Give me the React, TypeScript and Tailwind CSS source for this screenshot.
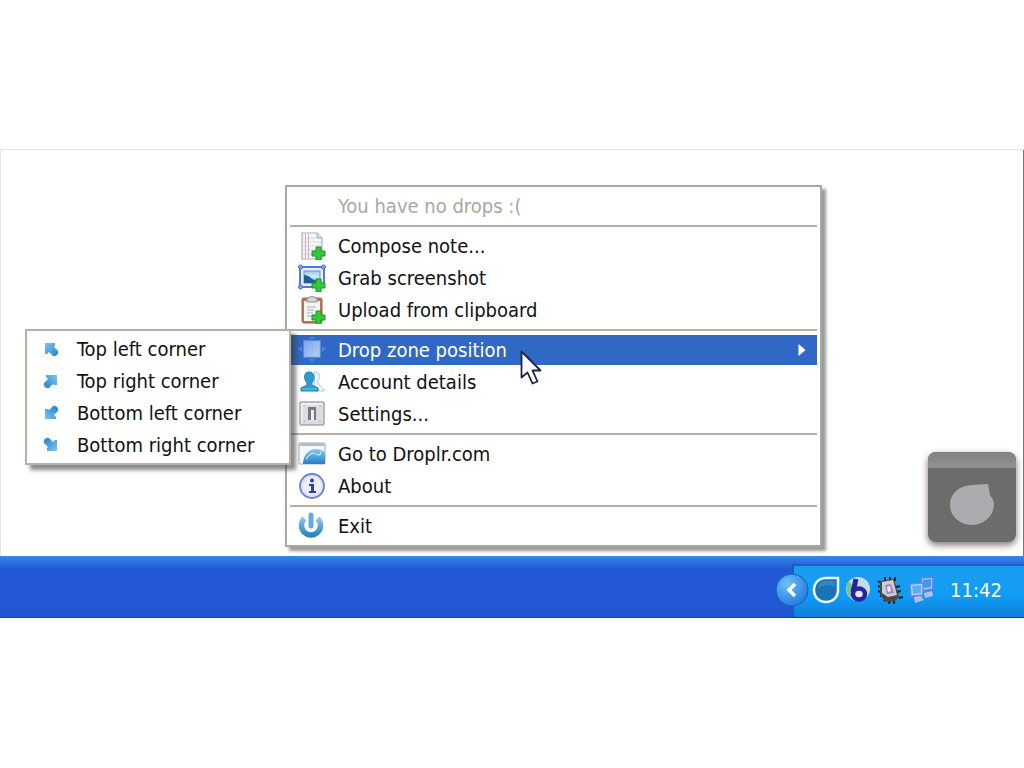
import React from 'react';

interface MenuItem {
  label: string;
  icon?: React.ReactNode;
  disabled?: boolean;
  submenu?: MenuItem[];
}

const Plus: React.FC = () => (
  <path d="M18 15h5v4h4v5h-4v4h-5v-4h-4v-5h4z" fill="#35c63a" stroke="#1c9426" strokeWidth="1" strokeLinejoin="round" />
);

const NoteIcon: React.FC = () => (
  <svg viewBox="0 0 28 28" className="size-7">
    <path d="M4 1h15l5 5v21H4z" fill="#f6f7f9" stroke="#a9adb5" strokeWidth="1.2" />
    <path d="M19 1v5h5" fill="#dde0e6" stroke="#a9adb5" />
    <path d="M5 6h13M5 10h18M5 14h18M5 18h18M5 22h18" stroke="#d3dae3" strokeWidth="1" />
    <path d="M7.500 2v24M10.500 2v24" stroke="#eba3ad" strokeWidth="1" />
    <Plus />
  </svg>
);

const ScreenshotIcon: React.FC = () => (
  <svg viewBox="0 0 28 28" className="size-7">
    <defs>
      <linearGradient id="shot" x1="0" y1="0" x2="0" y2="1">
        <stop offset="0" stopColor="#9cc8f4" />
        <stop offset="0.5" stopColor="#d6ecfa" />
        <stop offset="1" stopColor="#3f86c9" />
      </linearGradient>
    </defs>
    <rect x="2" y="3" width="24" height="20" fill="#e4edfb" stroke="#5577dc" strokeWidth="2" />
    <rect x="6" y="7" width="16" height="12" fill="url(#shot)" stroke="#6f92d4" strokeWidth="1" />
    <path d="M6 11c4 0 7 3 10 5l6 1v2H6z" fill="#1d5f94" />
    <g fill="#8aa3ee" stroke="#4468d6" strokeWidth="1">
      <circle cx="2.500" cy="3" r="2" />
      <circle cx="25.500" cy="3" r="2" />
      <circle cx="2.500" cy="23" r="2" />
    </g>
    <Plus />
  </svg>
);

const ClipboardIcon: React.FC = () => (
  <svg viewBox="0 0 28 28" className="size-7">
    <rect x="4" y="2" width="20" height="25" rx="2" fill="#b87750" stroke="#a2623c" strokeWidth="1" />
    <path d="M6 5h16v20H6z" fill="#f2f4f6" />
    <path d="M9 2h2c0-2 6-2 6 0h2v4H9z" fill="#d0d2d6" stroke="#8f9298" strokeWidth="1" />
    <path d="M9 11h9M9 14h7M9 17h6M9 20h5" stroke="#c0c6cc" strokeWidth="1.500" />
    <Plus />
  </svg>
);

const ZoneIcon: React.FC = () => (
  <svg viewBox="0 0 28 28" className="size-7">
    <defs>
      <linearGradient id="zone" x1="0" y1="0" x2="1" y2="1">
        <stop offset="0" stopColor="#7ba5e6" />
        <stop offset="1" stopColor="#b4d0f8" />
      </linearGradient>
    </defs>
    <path d="M14 0l3 3h-6zM14 26l3-3h-6zM0 13l4-3v6zM28 13l-4-3v6z" fill="#5181dc" />
    <rect x="6" y="5" width="16" height="16" fill="url(#zone)" stroke="#86abed" strokeWidth="1" />
  </svg>
);

const AccountIcon: React.FC = () => (
  <svg viewBox="0 0 28 28" className="size-7">
    <path d="M16 4c5-1 7 4 4 9v3l6 5v2h-9z" fill="#eef4fa" stroke="#b3cadb" strokeWidth="1" />
    <path d="M11 4c5 0 6 5 4 9l-1 2v2l6 3v3H3v-3l6-3v-2c-4-5-3-11 2-11z" fill="#2e9ccb" stroke="#2384b3" strokeWidth="1" />
    <path d="M4 21h15" stroke="#77c7e5" strokeWidth="1" />
  </svg>
);

const SettingsIcon: React.FC = () => (
  <svg viewBox="0 0 28 28" className="size-7">
    <rect x="2" y="2" width="24" height="23" rx="1" fill="#dddde0" stroke="#a8a8ad" strokeWidth="1.500" />
    <path d="M4 23V4h20" fill="none" stroke="#f5f5f6" strokeWidth="1.500" />
    <rect x="10" y="7" width="8" height="13" fill="#77777d" />
    <rect x="13" y="10" width="3" height="10" fill="#f1f1f2" />
    <g fill="#bcbcc1">
      <circle cx="6" cy="6" r="1" />
      <circle cx="22" cy="6" r="1" />
      <circle cx="6" cy="21" r="1" />
      <circle cx="22" cy="21" r="1" />
    </g>
  </svg>
);

const WebsiteIcon: React.FC = () => (
  <svg viewBox="0 0 28 28" className="size-7">
    <defs>
      <linearGradient id="globe" x1="0" y1="0" x2="0" y2="1">
        <stop offset="0" stopColor="#86c7ed" />
        <stop offset="1" stopColor="#2182c6" />
      </linearGradient>
    </defs>
    <rect x="1" y="3" width="26" height="21" rx="1" fill="#f4f8fb" stroke="#a1acb9" strokeWidth="1" />
    <path d="M1 3h26v3H1z" fill="#b5bdc8" />
    <path d="M5 24c0-8 5-15 13-15 4 0 7 1 9 4v11z" fill="url(#globe)" />
    <path d="M8 19c3-5 7-7 10-5s5 1 5-3" fill="none" stroke="#b4ddf3" strokeWidth="1.500" />
  </svg>
);

const AboutIcon: React.FC = () => (
  <svg viewBox="0 0 28 28" className="size-7">
    <circle cx="14" cy="14" r="12" fill="#eeeffa" stroke="#6f7bd0" strokeWidth="1.800" />
    <circle cx="14" cy="14" r="10" fill="none" stroke="#d3d7f3" strokeWidth="1" />
    <circle cx="14" cy="8.500" r="2" fill="#2f3fae" />
    <path d="M11 12h5v7h2v2h-7v-2h2v-5h-2z" fill="#2f3fae" />
  </svg>
);

const PowerIcon: React.FC = () => (
  <svg viewBox="0 0 28 28" className="size-7">
    <defs>
      <linearGradient id="power" x1="0" y1="0" x2="0" y2="1">
        <stop offset="0" stopColor="#8cc4ea" />
        <stop offset="1" stopColor="#2b84c2" />
      </linearGradient>
    </defs>
    <path d="M6.500 6.500a9.500 9.500 0 1 0 13 0" fill="none" stroke="url(#power)" strokeWidth="5.500" />
    <path d="M13 3v11" stroke="#62abdd" strokeWidth="5" strokeLinecap="round" />
  </svg>
);

const CornerArrow: React.FC<{ turn: string }> = ({ turn }) => (
  <svg viewBox="0 0 28 28" className={`size-7 ${turn}`}>
    <defs>
      <linearGradient id="arrow" x1="0" y1="0" x2="1" y2="1">
        <stop offset="0" stopColor="#7fc3ee" />
        <stop offset="1" stopColor="#1f84d0" />
      </linearGradient>
    </defs>
    <path d="M8 8h10v3l-1 1 4 4c1 3-2 6-5 5l-4-4-2 2H8z" fill="url(#arrow)" />
  </svg>
);

const menuGroups: MenuItem[][] = [
  [{ label: 'You have no drops :(', disabled: true }],
  [
    { label: 'Compose note...', icon: <NoteIcon /> },
    { label: 'Grab screenshot', icon: <ScreenshotIcon /> },
    { label: 'Upload from clipboard', icon: <ClipboardIcon /> },
  ],
  [
    {
      label: 'Drop zone position',
      icon: <ZoneIcon />,
      submenu: [
        { label: 'Top left corner', icon: <CornerArrow turn="" /> },
        { label: 'Top right corner', icon: <CornerArrow turn="rotate-90" /> },
        { label: 'Bottom left corner', icon: <CornerArrow turn="-rotate-90" /> },
        { label: 'Bottom right corner', icon: <CornerArrow turn="rotate-180" /> },
      ],
    },
    { label: 'Account details', icon: <AccountIcon /> },
    { label: 'Settings...', icon: <SettingsIcon /> },
  ],
  [
    { label: 'Go to Droplr.com', icon: <WebsiteIcon /> },
    { label: 'About', icon: <AboutIcon /> },
  ],
  [{ label: 'Exit', icon: <PowerIcon /> }],
];

const Cursor: React.FC = () => (
  <svg viewBox="0 0 24 36" className="absolute top-4 left-[230px] z-10 h-9 w-6">
    <path d="M1.500 1.500v26l6-5 5 11 5-2-5-11h8z" fill="#fff" stroke="#1d2340" strokeWidth="1.800" strokeLinejoin="round" />
  </svg>
);

const MenuRow: React.FC<{ item: MenuItem }> = ({ item }) => (
  <li className="relative">
    <button
      type="button"
      disabled={item.disabled}
      className={`flex h-8 w-full items-center gap-3 border-y border-transparent bg-clip-padding pl-2 pr-2.5 text-left whitespace-nowrap ${
        item.disabled ? 'text-[#aca899]' : item.submenu ? 'bg-[#3168c5] text-white' : 'text-[#111]'
      }`}
    >
      <span className="w-7 shrink-0">{item.icon}</span>
      <span className="grow">{item.label}</span>
      {item.submenu && (
        <svg viewBox="0 0 9 14" className="h-3.5 w-2.5">
          <path d="M1 1l7 6-7 6z" fill="#fff" />
        </svg>
      )}
    </button>
    {item.submenu && (
      <>
        <ul className="absolute -top-[5px] -left-[265px] w-[266px] border-2 border-[#b5b1a8] bg-white p-0.5 shadow-[5px_5px_4px_rgba(60,60,60,0.6)]">
          {item.submenu.map(sub => (
            <MenuRow key={sub.label} item={sub} />
          ))}
        </ul>
        <Cursor />
      </>
    )}
  </li>
);

const DropZone: React.FC = () => (
  <div className="absolute right-2 bottom-[76px] h-[90px] w-[88px] overflow-hidden rounded-lg bg-[#6b6d6a] shadow-[0_3px_7px_rgba(60,40,50,0.65)]">
    <div className="h-4 bg-linear-to-b from-[#808280] to-[#929492]" />
    <svg viewBox="0 0 88 74" className="w-full">
      <path d="M60 16l2 11c2 3 4 6 4 9 0 11-9 20-21 21-14 0-23-9-23-20 0-12 9-19 22-20z" fill="#adabaf" />
    </svg>
  </div>
);

const Tray: React.FC = () => (
  <div className="relative flex w-[232px] items-center border-l-2 border-[#1560b8] bg-linear-to-b from-[#1b9df0] from-0% via-[#109cf4] via-60% to-[#0f7fdc] to-100% pl-[18px] shadow-[inset_0_2px_0_#1565b8]">
    <button type="button" aria-label="Show hidden icons" className="absolute -left-[19px]">
      <svg viewBox="0 0 34 34" className="size-[34px]">
        <defs>
          <radialGradient id="chevron" cx="0.35" cy="0.3" r="0.8">
            <stop offset="0" stopColor="#6cc0fa" />
            <stop offset="1" stopColor="#1d76dc" />
          </radialGradient>
        </defs>
        <circle cx="17" cy="17" r="16" fill="url(#chevron)" stroke="#1a5cb8" strokeWidth="1" />
        <path d="M20 11l-6 6 6 6" fill="none" stroke="#fff" strokeWidth="3.500" />
      </svg>
    </button>
    <div className="flex items-center gap-1">
      <svg viewBox="0 0 28 28" className="size-7">
        <path d="M26 2v12c0 7-5 12-12 12-7 0-12-5-12-12S7 2 14 2z" fill="#1a73b4" stroke="#eef6fb" strokeWidth="2.500" />
        <path d="M6 13c5-5 11-5 17-2V5h-9c-5 0-8 4-8 8z" fill="#3288c4" />
      </svg>
      <svg viewBox="0 0 28 28" className="size-7">
        <circle cx="14" cy="13" r="12" fill="#c4dde2" />
        <path d="M5 5a12 12 0 0 0 2 17l4-8z" fill="#74c493" />
        <path d="M12 3L9 16" stroke="#28249f" strokeWidth="5" />
        <ellipse cx="15" cy="18" rx="6" ry="5.500" fill="#e2e8f8" stroke="#28249f" strokeWidth="4.500" />
      </svg>
      <svg viewBox="0 0 28 28" className="size-7">
        <path d="M2 5l3 2M2 10l3 1M2 15l3 1M4 20l4-1M8 25l2-3M13 28l1-4M18 28v-4M19 1v4M14 1v4M9 1v4M24 10l-4 1M25 15l-4 1M27 21l-4 1" stroke="#1d1d26" strokeWidth="2" />
        <path d="M4 5l14-2 5 18-4 4-9 1-6-7z" fill="#4b4850" />
        <path d="M6 6l11-2 4 15-9 2-6-4z" fill="#d3cdc9" />
        <path d="M9 9l6-1 3 9-7 1z" fill="#9685dd" />
        <path d="M11 11l3-1 1 5-3 1z" fill="#f3f0ff" />
      </svg>
      <svg viewBox="0 0 28 28" className="size-7">
        <path d="M13 2l12-1v12l-11 2z" fill="#a5c4f5" stroke="#5e83d3" strokeWidth="1.500" />
        <path d="M15 4l8-1v8l-8 1z" fill="#4196ee" />
        <path d="M16 17l8-2 1 5-8 2z" fill="#b9bde8" />
        <path d="M2 8l13-1v12L3 20z" fill="#b9d4fa" stroke="#668cdc" strokeWidth="1.500" />
        <path d="M4 10l9-1v8l-8 1z" fill="#57b1f4" />
        <path d="M6 21l7-1 3 4-9 3z" fill="#bcb9ea" />
      </svg>
    </div>
    <time className="ml-3.5 text-white">11:42</time>
  </div>
);

const App: React.FC = () => {
  return (
    <div className="flex min-h-screen flex-col justify-center bg-white pb-0.5 font-['DejaVu_Sans_Condensed','DejaVu_Sans',sans-serif] text-[20px] leading-6">
      <main className="relative border-t border-l border-[#e4e4e4]">
        {/* Desktop */}
        <div className="flex justify-end border-r border-[#777] pt-[35px] pr-[201px] pb-[9px]">
          <nav aria-label="Droplr" className="w-[537px] border-2 border-[#aaa79f] bg-white p-[3px] shadow-[4px_4px_3px_#9a9a9a]">
            {menuGroups.map((group, idx) => (
              <React.Fragment key={idx}>
                {idx > 0 && <hr className="my-[3px] border-t-2 border-[#b3b0a7]" />}
                <ul>
                  {group.map(item => (
                    <MenuRow key={item.label} item={item} />
                  ))}
                </ul>
              </React.Fragment>
            ))}
          </nav>
        </div>
        <DropZone />

        {/* Taskbar */}
        <footer className="-ml-px flex h-[62px] justify-end border-b border-[#173f9c] bg-linear-to-b from-[#3888ea] from-0% via-[#2259d9] via-20% to-[#2156d4] to-100% pt-2">
          <Tray />
        </footer>
      </main>
    </div>
  );
};

export default App;
